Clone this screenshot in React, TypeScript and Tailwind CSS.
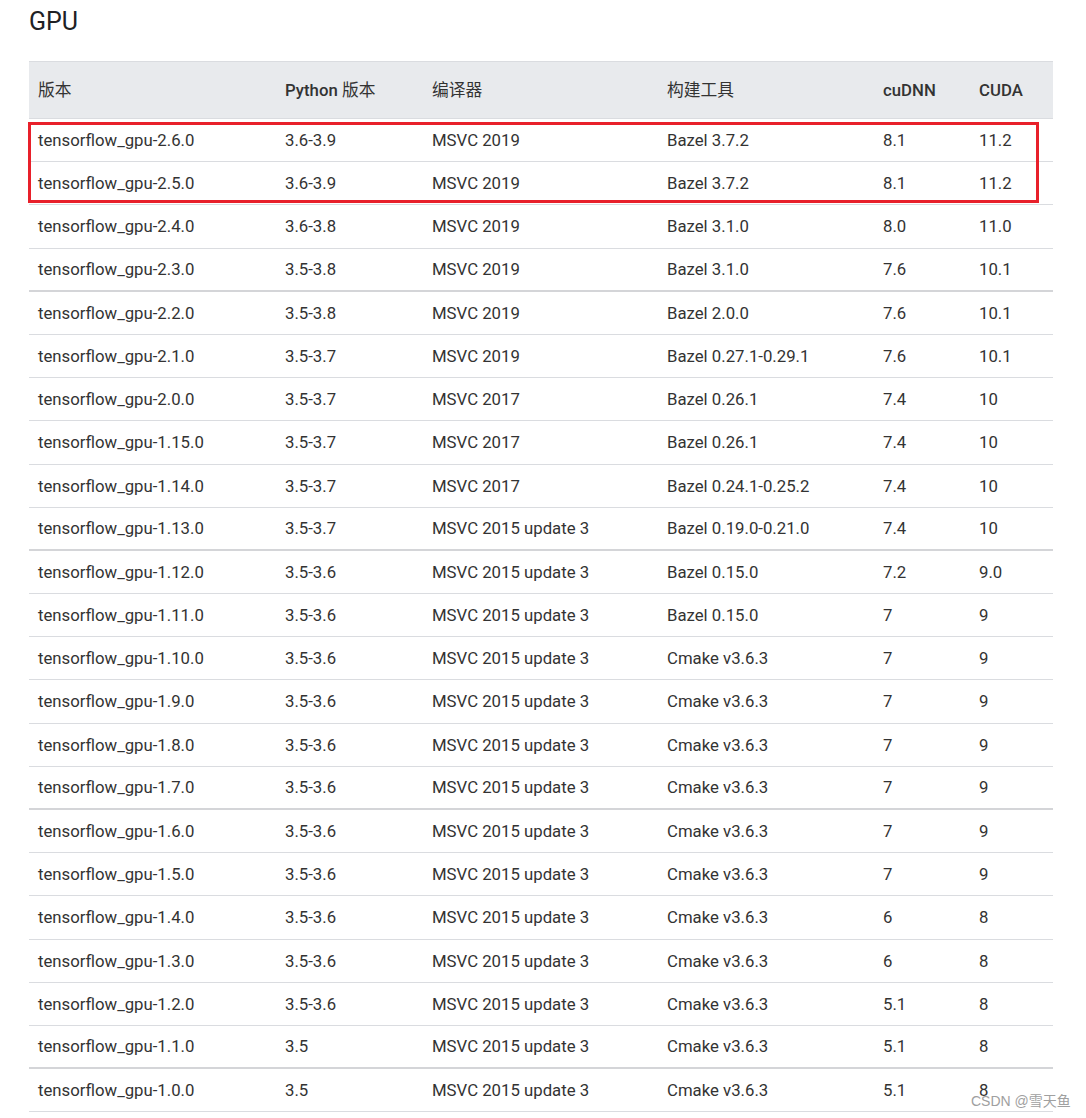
import React from "react";

const rows: string[][] = [
  ["tensorflow_gpu-2.6.0", "3.6-3.9", "MSVC 2019", "Bazel 3.7.2", "8.1", "11.2"],
  ["tensorflow_gpu-2.5.0", "3.6-3.9", "MSVC 2019", "Bazel 3.7.2", "8.1", "11.2"],
  ["tensorflow_gpu-2.4.0", "3.6-3.8", "MSVC 2019", "Bazel 3.1.0", "8.0", "11.0"],
  ["tensorflow_gpu-2.3.0", "3.5-3.8", "MSVC 2019", "Bazel 3.1.0", "7.6", "10.1"],
  ["tensorflow_gpu-2.2.0", "3.5-3.8", "MSVC 2019", "Bazel 2.0.0", "7.6", "10.1"],
  ["tensorflow_gpu-2.1.0", "3.5-3.7", "MSVC 2019", "Bazel 0.27.1-0.29.1", "7.6", "10.1"],
  ["tensorflow_gpu-2.0.0", "3.5-3.7", "MSVC 2017", "Bazel 0.26.1", "7.4", "10"],
  ["tensorflow_gpu-1.15.0", "3.5-3.7", "MSVC 2017", "Bazel 0.26.1", "7.4", "10"],
  ["tensorflow_gpu-1.14.0", "3.5-3.7", "MSVC 2017", "Bazel 0.24.1-0.25.2", "7.4", "10"],
  ["tensorflow_gpu-1.13.0", "3.5-3.7", "MSVC 2015 update 3", "Bazel 0.19.0-0.21.0", "7.4", "10"],
  ["tensorflow_gpu-1.12.0", "3.5-3.6", "MSVC 2015 update 3", "Bazel 0.15.0", "7.2", "9.0"],
  ["tensorflow_gpu-1.11.0", "3.5-3.6", "MSVC 2015 update 3", "Bazel 0.15.0", "7", "9"],
  ["tensorflow_gpu-1.10.0", "3.5-3.6", "MSVC 2015 update 3", "Cmake v3.6.3", "7", "9"],
  ["tensorflow_gpu-1.9.0", "3.5-3.6", "MSVC 2015 update 3", "Cmake v3.6.3", "7", "9"],
  ["tensorflow_gpu-1.8.0", "3.5-3.6", "MSVC 2015 update 3", "Cmake v3.6.3", "7", "9"],
  ["tensorflow_gpu-1.7.0", "3.5-3.6", "MSVC 2015 update 3", "Cmake v3.6.3", "7", "9"],
  ["tensorflow_gpu-1.6.0", "3.5-3.6", "MSVC 2015 update 3", "Cmake v3.6.3", "7", "9"],
  ["tensorflow_gpu-1.5.0", "3.5-3.6", "MSVC 2015 update 3", "Cmake v3.6.3", "7", "9"],
  ["tensorflow_gpu-1.4.0", "3.5-3.6", "MSVC 2015 update 3", "Cmake v3.6.3", "6", "8"],
  ["tensorflow_gpu-1.3.0", "3.5-3.6", "MSVC 2015 update 3", "Cmake v3.6.3", "6", "8"],
  ["tensorflow_gpu-1.2.0", "3.5-3.6", "MSVC 2015 update 3", "Cmake v3.6.3", "5.1", "8"],
  ["tensorflow_gpu-1.1.0", "3.5", "MSVC 2015 update 3", "Cmake v3.6.3", "5.1", "8"],
  ["tensorflow_gpu-1.0.0", "3.5", "MSVC 2015 update 3", "Cmake v3.6.3", "5.1", "8"],
];

const thick = new Set([3, 9, 15, 21]);

const gridCols = "grid grid-cols-[247px_147px_235px_216px_96px_83px]";

export default function App() {
  return (
    <div
      className="w-[1086px] h-[1118px] bg-white relative overflow-hidden text-[#333]"
      style={{ fontFamily: 'Roboto, "Noto Sans CJK SC", sans-serif' }}
    >
      <div className="pl-[29px] pt-[6px]">
        <h2 className="text-[25px] leading-[32px] font-normal text-[#202124]">GPU</h2>
      </div>
      <div className="relative ml-[29px] mt-[23px] w-[1024px]">
        <div className={`${gridCols} h-[58px] bg-[#e8eaed] border-t border-b border-[#dadce0] items-center text-[16.75px] pt-[2px]`}>
          <div className="pl-[9px]">版本</div>
          <div className="pl-[9px] font-medium">
            Python <span className="font-normal">版本</span>
          </div>
          <div className="pl-[9px]">编译器</div>
          <div className="pl-[9px]">构建工具</div>
          <div className="pl-[9px] font-medium">cuDNN</div>
          <div className="pl-[9px] font-medium">CUDA</div>
        </div>
        {rows.map((r, i) => (
          <div
            key={i}
            className={`${gridCols} h-[43.2px] items-center text-[16.75px] pt-[1px] ${
              thick.has(i) ? "border-b-2 border-[#d4d5d8]" : "border-b border-[#dadce0]"
            }`}
          >
            {r.map((c, j) => (
              <div key={j} className="pl-[9px] whitespace-nowrap">
                {c}
              </div>
            ))}
          </div>
        ))}
        <div className="absolute left-[-1px] top-[61px] w-[1011px] h-[81px] border-[3px] border-[#e8202a] pointer-events-none" />
      </div>
      <div
        className="absolute left-[971px] top-[1092px] text-[14px] leading-[18px] text-[#a0a0a0]"
        style={{ fontFamily: '"Liberation Sans", "Noto Sans CJK SC", sans-serif' }}
      >
        CSDN @雪天鱼
      </div>
    </div>
  );
}
